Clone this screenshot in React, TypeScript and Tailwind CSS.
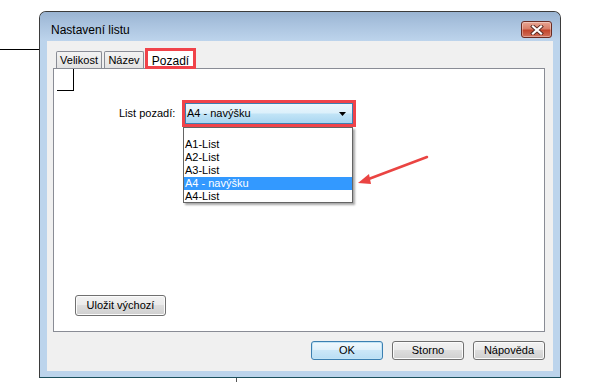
import React from "react";

const font = { fontFamily: '"Liberation Sans", Arial, sans-serif' };

function WinButton({ label, w, primary = false }: { label: string; w: string; primary?: boolean }) {
  return (
    <div
      className={
        "h-[19px] rounded-[3px] border flex items-center justify-center text-[11px] text-black " +
        w +
        (primary
          ? " border-[#3c7fb1] bg-[linear-gradient(to_bottom,#f0f8fd_0%,#e1f1fb_45%,#cbe7f8_50%,#b9def4_100%)] shadow-[inset_0_0_0_1px_#c2e4f6]"
          : " border-[#707070] bg-[linear-gradient(to_bottom,#f2f2f2_0%,#ebebeb_45%,#dddddd_50%,#cfcfcf_100%)] shadow-[inset_0_0_0_1px_#fbfbfb]")
      }
    >
      {label}
    </div>
  );
}

export default function App() {
  return (
    <div className="relative w-[590px] h-[382px] bg-white overflow-hidden" style={font}>
      {/* canvas drawing lines behind the dialog */}
      <div className="absolute left-0 top-[49px] w-[40px] h-px bg-black" />
      <div className="absolute left-[236px] top-[377px] w-px h-[6px] bg-[#555]" />

      {/* dialog window */}
      <div className="absolute left-[39px] top-[11px] w-[522px] h-[367px] border border-[#3b3b3b] border-b-[#1b4f5c] rounded-t-[7px] bg-[#bcd4ec] flex flex-col overflow-hidden">
        {/* title bar */}
        <div className="h-[29px] shrink-0 flex items-start justify-between pl-[11px] pr-[8px] bg-[linear-gradient(to_bottom,#9ab4d2_0%,#a9c2de_40%,#bdd4ec_100%)]">
          <div className="mt-[11px] text-[12px] leading-[15px] text-black">Nastavení listu</div>
          <div className="mt-[9px] w-[31px] h-[17px] rounded-[3px] border border-[#6a2b22] bg-[linear-gradient(to_bottom,#e8a593_0%,#d9806a_45%,#c2452c_55%,#d2705a_100%)] flex items-center justify-center shadow-[inset_0_0_0_1px_rgba(255,255,255,0.35)]">
            <svg width="14" height="10" viewBox="0 0 14 10">
              <path d="M3 1.5 L11 8.5 M11 1.5 L3 8.5" stroke="#5a2a22" strokeWidth="4" strokeLinecap="square" />
              <path d="M3 1.5 L11 8.5 M11 1.5 L3 8.5" stroke="#ffffff" strokeWidth="2.2" strokeLinecap="square" />
            </svg>
          </div>
        </div>

        {/* client area */}
        <div className="mx-[7px] mb-[7px] flex-1 bg-[#f0f0f0] flex flex-col pl-[6px] pr-[8px] pt-[10px] pb-[11px]">
          {/* tab strip */}
          <div className="h-[17px] shrink-0 flex items-end pl-[3px] relative z-10">
            <div className="w-[46px] h-[17px] border border-b-0 border-[#898c95] rounded-t-[2px] bg-[linear-gradient(to_bottom,#f3f3f3,#e2e2e2)] text-[11px] flex items-center justify-center text-black">
              Velikost
            </div>
            <div className="ml-[2px] w-[40px] h-[17px] border border-b-0 border-[#898c95] rounded-t-[2px] bg-[linear-gradient(to_bottom,#f3f3f3,#e2e2e2)] text-[11px] flex items-center justify-center text-black">
              Název
            </div>
            <div className="ml-[1px] w-[51px] h-[21px] -mb-[1px] border-[3px] border-[#f0434a] bg-white text-[12px] flex items-start justify-center pt-[1px] text-black">
              Pozadí
            </div>
          </div>

          {/* tab panel */}
          <div className="relative h-[264px] shrink-0 border border-[#898c95] bg-white flex flex-col">
            <div className="absolute left-[19px] top-0 w-px h-[22px] bg-black" />
            <div className="absolute left-[3px] top-[21px] w-[17px] h-px bg-black" />

            <div className="mt-[31px] flex items-center">
              <div className="ml-[65px] w-[63px] text-[11px] text-black">List pozadí:</div>
              <div className="relative w-[174px] h-[27px] border-[3px] border-[#f0434a]">
                <div className="w-full h-full border border-[#3c7fb1] bg-[linear-gradient(to_bottom,#ecf7fd_0%,#dcf0fb_45%,#c0e3f6_55%,#a9d6f1_100%)] flex items-center justify-between pl-[1px] pr-[6px]">
                  <span className="text-[11px] text-black">A4 - navýšku</span>
                  <svg width="7" height="4" viewBox="0 0 7 4">
                    <path d="M0 0 L7 0 L3.5 4 Z" fill="#000" />
                  </svg>
                </div>
                {/* dropdown list */}
                <div className="absolute left-[-2px] top-[24px] w-[170px] h-[76px] bg-white border border-[#646464] shadow-[2px_2px_2px_rgba(0,0,0,0.35)] pt-[10px] z-20">
                  <div className="h-[13px] leading-[13px] text-[11px] pl-[1px] text-black">A1-List</div>
                  <div className="h-[13px] leading-[13px] text-[11px] pl-[1px] text-black">A2-List</div>
                  <div className="h-[13px] leading-[13px] text-[11px] pl-[1px] text-black">A3-List</div>
                  <div className="h-[13px] leading-[13px] text-[11px] pl-[1px] text-white bg-[#3399ff]">A4 - navýšku</div>
                  <div className="h-[13px] leading-[13px] text-[11px] pl-[1px] text-black">A4-List</div>
                </div>
              </div>
            </div>

            <div className="mt-auto mb-[15px] ml-[21px]">
              <WinButton label="Uložit výchozí" w="w-[91px] h-[21px]" />
            </div>
          </div>

          {/* bottom buttons */}
          <div className="mt-[9px] flex justify-end gap-[9px]">
            <WinButton label="OK" w="w-[72px]" primary />
            <WinButton label="Storno" w="w-[72px]" />
            <WinButton label="Nápověda" w="w-[72px]" />
          </div>
        </div>
      </div>

      {/* red annotation arrow */}
      <svg className="absolute left-0 top-0 pointer-events-none" width="590" height="382">
        <line x1="427" y1="157" x2="366" y2="180" stroke="#ea4442" strokeWidth="2.5" strokeLinecap="round" />
        <path d="M358 183 L369 174 L371 184 Z" fill="#ea4442" />
      </svg>
    </div>
  );
}
